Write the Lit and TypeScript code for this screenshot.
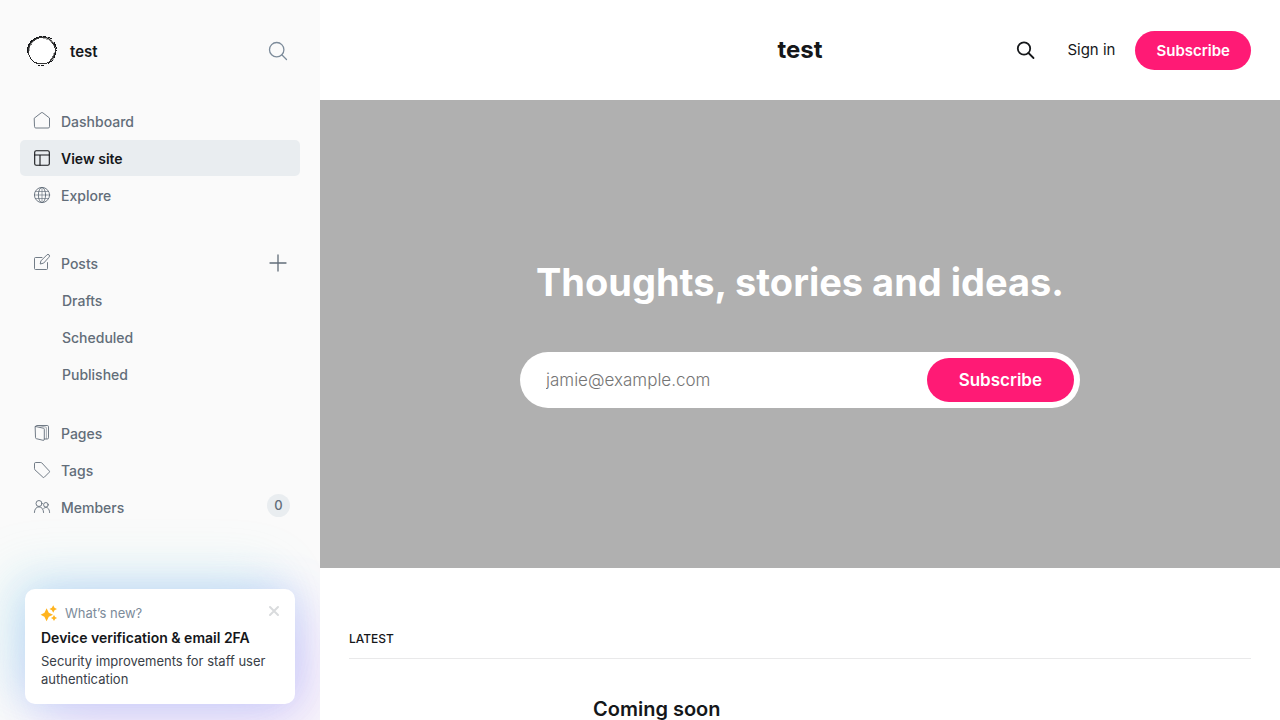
import { LitElement, html, svg, css, nothing, TemplateResult } from "lit";
import { customElement } from "lit/decorators.js";
import { classMap } from "lit/directives/class-map.js";

type NavItem = {
  label: string;
  icon?: TemplateResult;
  active?: boolean;
  add?: boolean;
  count?: number;
};

const icons = {
  home: svg`<path d="M.5 5 7.200 -.2a1.300 1.300 0 0 1 1.600 0L15.500 5v8.700a1.300 1.300 0 0 1-1.300 1.300H1.800a1.300 1.300 0 0 1-1.300-1.300z"/>`,
  layout: svg`<rect x=".7" y=".7" width="14.6" height="14.6" rx="1.5"/><path d="M.7 5h14.6M6 5v10.3"/>`,
  globe: svg`<circle cx="8" cy="8" r="7.6"/><ellipse cx="8" cy="8" rx="3.6" ry="7.6"/><path d="M.4 8h15.2M1.6 4.500h12.800M1.600 11.500h12.800M8 .4v15.2" stroke-opacity=".7"/>`,
  edit: svg`<path d="M8 2.500H1.500a1 1 0 0 0-1 1v10a1 1 0 0 0 1 1h11a1 1 0 0 0 1-1V7.600"/><path d="m9.300 8.200-3.100.8.700-3.100L12.900-.1a1.500 1.500 0 0 1 2.200 0 1.500 1.500 0 0 1 0 2.200z"/>`,
  pages: svg`<path d="M1.500 1.500 9.400 3.200a1 1 0 0 1 .9 1v10.100a1 1 0 0 1-1.200 1L2.400 13.700a1 1 0 0 1-.9-1zM1.500 1.700a1.200 1.200 0 0 1 1.200-1.200h10.600a1.200 1.200 0 0 1 1.200 1.200v11.100a1.200 1.200 0 0 1-1.200 1.200h-3"/><path d="m5 .7 6.500 1.300a1 1 0 0 1 .9 1v10.500" stroke-opacity=".6"/>`,
  tag: svg`<path d="M.5 1.500a1 1 0 0 1 1-1h5.300a1.500 1.500 0 0 1 1 .4l7.400 8a1 1 0 0 1 0 1.400l-4.900 4.900a1 1 0 0 1-1.400 0l-8-7.400a1.500 1.500 0 0 1-.4-1z"/>`,
  members: svg`<circle cx="5" cy="4.500" r="3"/><path d="M.4 13.500c.1-3.600 2-5.600 4.600-5.600s4.400 2 4.600 5.600"/><circle cx="11.900" cy="5.800" r="2.300"/><path d="M9.800 9.300c2.700-2.200 5.700-.3 5.800 4.200"/>`,
};

@customElement("app-root")
export class AppRoot extends LitElement {
  static styles = css`
    :host {
      display: flex;
      height: 100vh;
      overflow: hidden;
      background: #fff;
      color: #15171a;
      font-family: Inter, "Liberation Sans", sans-serif;
      font-size: 14px;
      line-height: 18px;
    }
    * {
      box-sizing: border-box;
    }
    button,
    input {
      font: inherit;
      color: inherit;
      border: 0;
      background: none;
      padding: 0;
      margin: 0;
    }
    button {
      cursor: pointer;
    }
    a {
      color: inherit;
      text-decoration: none;
    }
    h1, h2, h3, p, ul {
      margin: 0;
      padding: 0;
    }
    svg {
      display: block;
      flex: none;
      overflow: visible;
      fill: none;
      stroke: currentColor;
      stroke-linecap: round;
      stroke-linejoin: round;
    }
    .sidebar {
      display: flex;
      flex-direction: column;
      flex: none;
      width: 320px;
      overflow: hidden;
      background: #fafafa;
    }
    .brand {
      display: flex;
      align-items: center;
      gap: 12px;
      padding: 35px 32px 36px 26px;
      font-size: 15px;
      font-weight: 600;
    }
    .brand-name {
      flex: 1;
      padding-top: 2px;
    }
    .brand-search {
      color: #7c8b9a;
    }
    .logo {
      shape-rendering: crispEdges;
    }
    .nav {
      display: flex;
      flex-direction: column;
      padding: 0 20px;
    }
    .group {
      display: flex;
      flex-direction: column;
      gap: 1px;
      list-style: none;
      margin-bottom: 32px;
    }
    .group.tight {
      margin-bottom: 23px;
    }
    .item {
      display: flex;
      align-items: center;
      height: 36px;
      border-radius: 5px;
      padding: 0 10px 0 14px;
      color: #626d79;
      font-weight: 500;
    }
    .link {
      display: flex;
      flex: 1;
      align-items: center;
      gap: 11px;
      line-height: 20px;
    }
    .item.sub {
      padding-left: 42px;
    }
    .item.active {
      background: #e9edf0;
      color: #15171a;
      font-weight: 600;
    }
    .label {
      padding-top: 2px;
    }
    .glyph {
      stroke-width: 0.9;
    }
    .active .glyph {
      stroke-width: 1.1;
    }
    .count {
      display: grid;
      place-items: center;
      width: 23px;
      height: 23px;
      border-radius: 50%;
      background: #e9edf0;
      font-size: 13px;
      margin-bottom: 4px;
    }
    .add {
      margin-right: 3px;
      color: #626d79;
    }
    .news {
      margin: auto 25px 16px;
      padding: 15px 16px 16px;
      border-radius: 10px;
      background: #fff;
      box-shadow:
        -20px -16px 56px rgba(110, 225, 220, 0.18),
        20px 24px 60px rgba(190, 120, 255, 0.22),
        0 0 40px rgba(70, 130, 255, 0.26);
    }
    .news-head {
      display: flex;
      align-items: center;
      gap: 8px;
      color: #7c8b9a;
      font-size: 13px;
    }
    .news-label {
      flex: 1;
    }
    .sparkle {
      fill: #ffb41f;
      stroke: none;
    }
    .close {
      color: #d9dbdd;
      padding-bottom: 5px;
    }
    .news-title {
      margin-top: 7px;
      font-size: 14px;
      font-weight: 600;
      line-height: 18px;
    }
    .news-text {
      margin-top: 5px;
      color: #394047;
      font-size: 13px;
      line-height: 18px;
    }
    .site {
      flex: 1;
      min-width: 0;
      overflow-y: auto;
      scrollbar-width: none;
    }
    .header {
      display: grid;
      grid-template-columns: 1fr auto 1fr;
      align-items: center;
      height: 100px;
      padding: 0 29px;
    }
    .site-title {
      grid-column: 2;
      font-size: 24px;
      font-weight: 700;
      line-height: 30px;
    }
    .actions {
      display: flex;
      justify-content: flex-end;
      align-items: center;
      font-size: 15px;
    }
    .find {
      margin-right: 32px;
    }
    .sign-in {
      margin-right: 20px;
    }
    .pill {
      border-radius: 40px;
      background: #ff1a75;
      color: #fff;
      font-weight: 600;
    }
    .actions .pill {
      height: 39px;
      padding: 2px 21px 0;
    }
    .hero {
      display: flex;
      flex-direction: column;
      align-items: center;
      justify-content: center;
      gap: 45px;
      min-height: 65vh;
      padding: 0 29px 4px;
      background: #b0b0b0;
    }
    .hero-title {
      color: #fff;
      font-size: 38px;
      font-weight: 700;
      line-height: 50px;
      text-align: center;
    }
    .signup {
      display: flex;
      width: 100%;
      max-width: 560px;
      padding: 6px;
      border-radius: 56px;
      background: #fff;
      font-size: 17px;
    }
    .email {
      flex: 1;
      min-width: 0;
      padding: 0 20px;
      outline: 0;
      font-weight: 300;
    }
    .email::placeholder {
      color: #757575;
      opacity: 1;
    }
    .signup .pill {
      height: 44px;
      padding: 0 32px;
    }
    .feed {
      padding: 62px 29px;
    }
    .feed-title {
      padding-bottom: 10px;
      border-bottom: 1px solid #e9e9ea;
      font-size: 12px;
      font-weight: 500;
      line-height: 18px;
      text-transform: uppercase;
    }
    .post {
      display: grid;
      grid-template-columns: 200px 1fr;
      column-gap: 44px;
      padding-top: 38px;
    }
    .post-title {
      grid-column: 2;
      font-size: 20px;
      font-weight: 600;
      line-height: 24px;
    }
  `;

  private main: NavItem[] = [
    { label: "Dashboard", icon: icons.home },
    { label: "View site", icon: icons.layout, active: true },
    { label: "Explore", icon: icons.globe },
  ];

  private posts: NavItem[] = [
    { label: "Posts", icon: icons.edit, add: true },
    { label: "Drafts" },
    { label: "Scheduled" },
    { label: "Published" },
  ];

  private content: NavItem[] = [
    { label: "Pages", icon: icons.pages },
    { label: "Tags", icon: icons.tag },
    { label: "Members", icon: icons.members, count: 0 },
  ];

  private renderItem(item: NavItem) {
    return html`<li class=${classMap({ item: true, active: !!item.active, sub: !item.icon })}>
      <a class="link" href="#">
        ${item.icon ? html`<svg class="glyph" width="16" height="16" viewBox="0 0 16 16" aria-hidden="true">${item.icon}</svg>` : nothing}
        <span class="label">${item.label}</span>
      </a>
      ${item.add
        ? html`<button class="add" aria-label="New post">
            <svg width="18" height="18" viewBox="0 0 18 18" stroke-width="1.3"><path d="M9 1v16M1 9h16" /></svg>
          </button>`
        : nothing}
      ${item.count !== undefined ? html`<span class="count">${item.count}</span>` : nothing}
    </li>`;
  }

  render() {
    return html`
      <aside class="sidebar">
        <div class="brand">
          <svg class="logo" width="32" height="32" viewBox="0 0 32 32" aria-hidden="true">
            <circle cx="16" cy="16" r="13.5" fill="#fff" stroke="none" />
            <path d="M11 3C16 0 23 1 27 6s4 8 2 11c0-6-3-10-7-12S15 3 11 3zM30 17c0 7-4 10-9 12 4-3 5-6 7-12zM1 17C1 9 6 4 13 3 9 5 6 8 4 12L3 20z" fill="#a8a8a8" stroke="none" />
            <path d="M3 20C1 13 4 7 10 4s12-2 16 3 4 10 2 14-6 8-12 8S5 26 3 20z" stroke="#333" stroke-width="1" />
            <path d="M1 19C1 9 6 4 12 2M13 1h7M22 2l4 2M28 7l2 5v4M30 17l-2 6M27 25l-5 4M18 30h-6M9 28l-5-5" stroke="#15171a" stroke-width="1" stroke-dasharray="3 1" />
            <path d="M4 9l2 1M3 12l1 1M25 5l1 3M27 22l-3 3M28 20l-2 2" stroke="#666" stroke-width="1" />
          </svg>
          <span class="brand-name">test</span>
          <button class="brand-search" aria-label="Search">
            <svg width="20" height="20" viewBox="0 0 20 20" stroke-width="1.3"><circle cx="8.7" cy="8.7" r="7.2" /><path d="m14 14 4.500 4.500" /></svg>
          </button>
        </div>
        <nav class="nav">
          <ul class="group">${this.main.map((i) => this.renderItem(i))}</ul>
          <ul class="group tight">${this.posts.map((i) => this.renderItem(i))}</ul>
          <ul class="group">${this.content.map((i) => this.renderItem(i))}</ul>
        </nav>
        <section class="news">
          <div class="news-head">
            <svg class="sparkle" width="16" height="16" viewBox="0 0 16 16" aria-hidden="true">
              <path d="M5.600 3.300 7.800 7.700l4.200 2-4.200 2-2.200 4.500-2.200-4.500L-.4 9.700l3.900-2zM12.200.2l1.300 2.500L16 4l-2.500 1.300-1.300 2.500-1.300-2.500L8.400 4l2.500-1.300zM13 10.100l1.100 2 2 1-2 1-1.100 2-1.100-2-2-1 2-1z" />
            </svg>
            <span class="news-label">What’s new?</span>
            <button class="close" aria-label="Dismiss">
              <svg width="10" height="10" viewBox="0 0 10 10" stroke-width="2"><path d="m1 1 8 8M9 1 1 9" /></svg>
            </button>
          </div>
          <h2 class="news-title">Device verification &amp; email 2FA</h2>
          <p class="news-text">Security improvements for staff user authentication</p>
        </section>
      </aside>
      <main class="site">
        <header class="header">
          <a class="site-title" href="#">test</a>
          <div class="actions">
            <button class="find" aria-label="Search this site">
              <svg width="20" height="20" viewBox="0 0 20 20" stroke-width="1.8"><circle cx="9" cy="8.500" r="6.200" /><path d="m13.500 13 5 5" /></svg>
            </button>
            <a class="sign-in" href="#">Sign in</a>
            <button class="pill">Subscribe</button>
          </div>
        </header>
        <section class="hero">
          <h1 class="hero-title">Thoughts, stories and ideas.</h1>
          <form class="signup" @submit=${(e: Event) => e.preventDefault()}>
            <input class="email" type="email" placeholder="jamie@example.com" aria-label="Email address" />
            <button class="pill" type="submit">Subscribe</button>
          </form>
        </section>
        <section class="feed">
          <h2 class="feed-title">Latest</h2>
          <article class="post"><h3 class="post-title"><a href="#">Coming soon</a></h3></article>
        </section>
      </main>
    `;
  }
}
